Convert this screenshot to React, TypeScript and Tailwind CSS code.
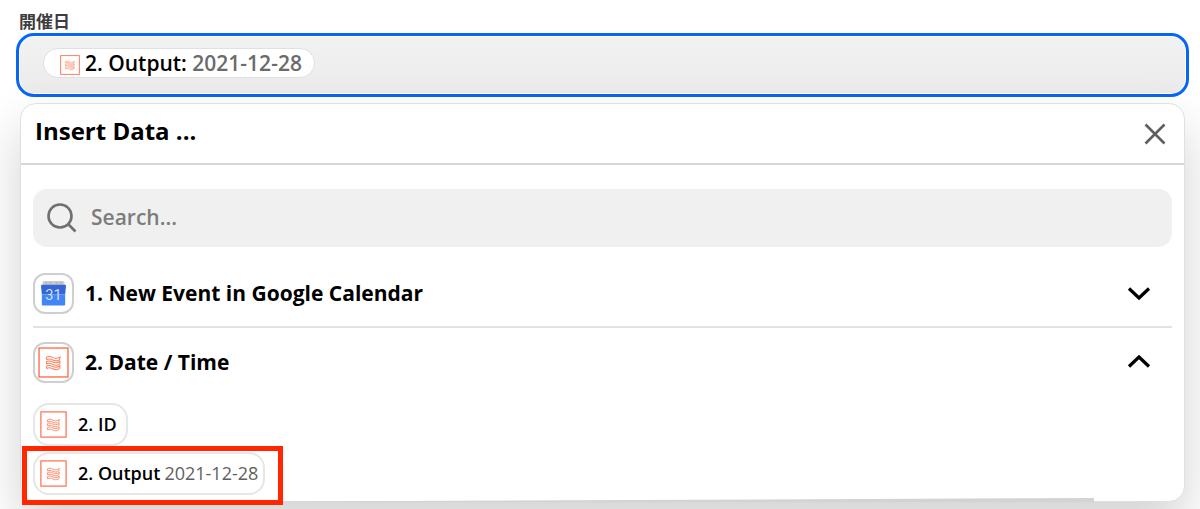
import React, { useState } from "react";
import clsx from "clsx";

function FormatterIcon({ className }: { className?: string }) {
  return (
    <svg viewBox="0 0 30 30" fill="none" className={className} aria-hidden="true">
      <rect x="1" y="1" width="28" height="28" stroke="#ff6a45" strokeWidth="1.3" />
      {[9.5, 13.8, 18.1].map((y) => (
        <path
          key={y}
          d={`M8 ${y + 0.6}c2.500-1.800 4.500-.8 6.500.2s4 1.200 7-.8l-.6 2.800c-2.400 1.600-4.600 1.200-6.600.2s-4-1.600-5.700-.2z`}
          stroke="#ff8360"
          strokeWidth="1"
          strokeLinejoin="round"
        />
      ))}
    </svg>
  );
}

function CalendarIcon({ className }: { className?: string }) {
  return (
    <svg viewBox="0 0 24 24" className={className} aria-hidden="true">
      <path d="M1.500 1.500Q1.500 0 3 0H21Q22.500 0 22.500 1.500V5H1.500z" fill="#c9cacd" />
      <path d="M4 2h2M8 2h2M14 2h2M18 2h2" stroke="#a5a7ac" />
      <path d="M0 4.500Q0 3.500 1 3.500H23Q24 3.500 24 4.500L23.200 13H.8z" fill="#3367d6" />
      <path d="M.8 13H23.200V22.500Q23.200 23.500 22.200 23.500H1.800Q.8 23.500.8 22.500z" fill="#4285f4" />
      <text
        x="12"
        y="18.500"
        textAnchor="middle"
        fontSize="14"
        fill="#d3dffa"
        fontFamily="Roboto, sans-serif"
      >
        31
      </text>
    </svg>
  );
}

interface StepRowProps {
  title: string;
  open: boolean;
  onToggle: () => void;
  icon: React.ReactNode;
}

function StepRow({ title, open, onToggle, icon }: StepRowProps) {
  return (
    <button
      type="button"
      aria-expanded={open}
      onClick={onToggle}
      className="flex w-full items-center pr-5 text-left"
    >
      <span className="flex size-[41px] shrink-0 items-center justify-center rounded-xl border-2 border-[#cfcfcf] bg-white">
        {icon}
      </span>
      <span className="ml-[11px] flex-1 pb-[2px] text-[21px] leading-7 font-bold">
        {title}
      </span>
      <svg
        viewBox="0 0 26 26"
        fill="none"
        stroke="black"
        strokeWidth="3.2"
        className="size-[26px]"
        aria-hidden="true"
      >
        <path d={open ? "M3 16.500l10-9.500 10 9.500" : "M3 7.500l10 9.500 10-9.500"} />
      </svg>
    </button>
  );
}

interface DataChipProps {
  label: string;
  value?: string;
  highlighted?: boolean;
}

function DataChip({ label, value, highlighted }: DataChipProps) {
  return (
    <div className={clsx(highlighted && "relative")}>
      <button
        type="button"
        className="flex h-[43px] items-center rounded-2xl border-2 border-[#e6e6e6] bg-white px-[5px] text-lg"
      >
        <FormatterIcon className="size-[27px]" />
        <span className="ml-[11px] pr-1 pb-[2px] font-semibold">{label}</span>
        {value && <span className="pb-[2px] text-[#5f5f5f]">{value}</span>}
      </button>
      {highlighted && (
        <div className="pointer-events-none absolute -top-[6px] -right-[18px] -bottom-[10px] -left-[11px] z-10 border-5 border-[#ff2600]" />
      )}
    </div>
  );
}

export default function App() {
  const [calendarOpen, setCalendarOpen] = useState(false);
  const [dateOpen, setDateOpen] = useState(true);
  const [search, setSearch] = useState("");

  return (
    <div className="min-h-screen overflow-hidden bg-white px-4 pt-[11px] pb-[7px] font-['Open_Sans','Noto_Sans_CJK_JP',sans-serif] text-black">
      <div
        id="date-label"
        className="ml-[3px] text-[17px] leading-[22px] font-bold text-[#3d3d3d]"
      >
        開催日
      </div>
      <div
        role="group"
        aria-labelledby="date-label"
        className="mr-[-5px] rounded-[18px] border-3 border-[#0866f5] bg-white p-px"
      >
        <div className="flex h-14 items-start rounded-[14px] bg-linear-to-b from-[#f2f2f2] to-[#ebebeb] pt-[11px] pl-[23px]">
          <span className="flex h-[30px] items-center rounded-full border border-[#e0e0e0] bg-white pr-3 pl-4 text-[21px] font-semibold">
            <FormatterIcon className="mt-1 mr-[5px] size-[20px]" />
            <span className="pt-px">
              2. Output: <span className="text-[#6b6b6b]">2021-12-28</span>
            </span>
          </span>
        </div>
      </div>

      <section className="relative mt-[6px] mr-[-1px] ml-1 rounded-2xl border border-[#e0e0e0] bg-white pb-[6px] shadow-[0_24px_50px_rgba(0,0,0,0.18)]">
        <header className="flex h-[61px] items-center justify-between border-b-2 border-[#d6d6d6] pr-[18px] pb-1 pl-[14px]">
          <h2 className="pb-[2px] text-[24px] leading-8 font-bold">Insert Data ...</h2>
          <button type="button" aria-label="Close">
            <svg
              viewBox="0 0 22 22"
              fill="none"
              stroke="#5f5f5f"
              strokeWidth="2.6"
              className="mt-1 size-[22px]"
              aria-hidden="true"
            >
              <path d="M1.500 1.500l19 19M20.500 1.500l-19 19" />
            </svg>
          </button>
        </header>

        <div className="px-3 pt-6">
          <label className="flex h-[58px] items-center rounded-[14px] bg-[#f0f0f0] px-[14px]">
            <svg
              viewBox="0 0 30 30"
              fill="none"
              stroke="#6f6f6f"
              strokeWidth="2.6"
              className="size-[30px] shrink-0"
              aria-hidden="true"
            >
              <circle cx="13" cy="13" r="11.500" />
              <path d="M21 21l7.500 7.500" />
            </svg>
            <input
              type="text"
              aria-label="Search"
              placeholder="Search..."
              value={search}
              onChange={(e) => setSearch(e.target.value)}
              className="ml-[14px] min-w-0 flex-1 bg-transparent text-[21px] font-semibold outline-none placeholder:text-[#7c7c7c]"
            />
          </label>

          <div className="mt-[26px] border-b-2 border-[#e2e2e2] pb-3">
            <StepRow
              title="1. New Event in Google Calendar"
              open={calendarOpen}
              onToggle={() => setCalendarOpen(!calendarOpen)}
              icon={<CalendarIcon className="size-[25px]" />}
            />
          </div>
          <div className="pt-[14px]">
            <StepRow
              title="2. Date / Time"
              open={dateOpen}
              onToggle={() => setDateOpen(!dateOpen)}
              icon={<FormatterIcon className="size-[31px]" />}
            />
          </div>

          {dateOpen && (
            <div className="mt-5 flex flex-col items-start gap-[6px]">
              <DataChip label="2. ID" />
              <DataChip label="2. Output" value="2021-12-28" highlighted />
            </div>
          )}
        </div>
        <svg
          viewBox="0 0 811 4"
          preserveAspectRatio="none"
          className="absolute right-[90px] -bottom-px left-[262px] h-1 w-[calc(100%-352px)]"
          aria-hidden="true"
        >
          <path d="M0 3.500L811 0V4H0z" fill="#d3d3d3" />
        </svg>
      </section>
    </div>
  );
}
